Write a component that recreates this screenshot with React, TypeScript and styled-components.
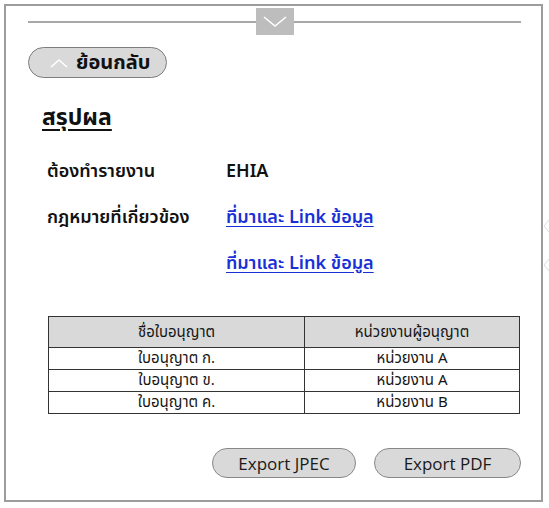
import styled, { createGlobalStyle } from "styled-components";

const GlobalStyle = createGlobalStyle`
  html, body {
    margin: 0;
    padding: 0;
    background: #ffffff;
  }
  body {
    font-family: "Noto Sans Thai", "Noto Sans", "DejaVu Sans", sans-serif;
    color: #111;
  }
`;

const Page = styled.div`
  position: relative;
  width: 549px;
  height: 508px;
  padding: 4px;
  box-sizing: border-box;
`;

const Frame = styled.div`
  width: 539px;
  height: 498px;
  box-sizing: border-box;
  border: 2px solid #9c9c9c;
  display: flex;
  flex-direction: column;
  padding: 2px 20px 0 22px;
`;

const DividerRow = styled.div`
  display: flex;
  align-items: center;
  height: 27px;
`;

const Line = styled.div`
  flex: 1;
  height: 2px;
  background: #a8a8a8;
`;

const Tab = styled.div`
  width: 38px;
  height: 27px;
  background: #bdbdbd;
  display: flex;
  align-items: center;
  justify-content: center;
`;

const BackButton = styled.button`
  margin-top: 12px;
  width: 139px;
  height: 31px;
  box-sizing: border-box;
  border: 1px solid #7d7d7d;
  border-radius: 16px;
  background: #d9d9d9;
  display: flex;
  align-items: center;
  gap: 8px;
  padding: 0 0 0 21px;
  font-family: inherit;
  font-size: 20px;
  font-weight: 700;
  color: #111;
`;

const Title = styled.h2`
  margin: 25px 0 0 14px;
  font-size: 23px;
  font-weight: 700;
  text-decoration: underline;
  text-underline-offset: 4px;
  line-height: 30px;
`;

const InfoGrid = styled.div`
  display: grid;
  grid-template-columns: 179px auto;
  row-gap: 16px;
  margin: 24px 0 0 19px;
  font-size: 18px;
  font-weight: 600;
  line-height: 30px;
`;

const LinkText = styled.a`
  color: #1a2fd6;
  text-decoration: underline;
  text-underline-offset: 3px;
  justify-self: start;
`;

const Table = styled.table`
  margin: 37px 0 0 20px;
  width: 472px;
  border-collapse: collapse;
  font-family: "Noto Sans Thai", "DejaVu Sans", sans-serif;
  font-size: 15px;
  color: #151515;
  border: 1px solid #333;
`;

const HeadCell = styled.th<{ $w?: number }>`
  background: #d9d9d9;
  font-weight: 400;
  height: 30px;
  padding: 0;
  border-left: 1px solid #333;
  border-bottom: 1px solid #333;
  width: ${(p) => (p.$w ? `${p.$w}px` : "auto")};
`;

const Cell = styled.td`
  text-align: center;
  height: 21px;
  padding: 0;
  line-height: 20px;
  border-left: 1px solid #333;
  border-bottom: 1px solid #333;
`;

const Actions = styled.div`
  margin-top: auto;
  margin-bottom: 22px;
  display: flex;
  justify-content: flex-end;
  gap: 18px;
`;

const PillButton = styled.button<{ $w: number }>`
  width: ${(p) => p.$w}px;
  height: 30px;
  box-sizing: border-box;
  border: 1px solid #888;
  border-radius: 15px;
  background: #d9d9d9;
  font-family: "Open Sans", "Noto Sans", sans-serif;
  font-size: 17px;
  color: #1a1a1a;
  padding: 0;
`;

const SideArrow = styled.div<{ $top: number }>`
  position: absolute;
  right: 0;
  top: ${(p) => p.$top}px;
`;

const rows = [
  ["ใบอนุญาต ก.", "หน่วยงาน A"],
  ["ใบอนุญาต ข.", "หน่วยงาน A"],
  ["ใบอนุญาต ค.", "หน่วยงาน B"],
];

function Chevron() {
  return (
    <svg width="26" height="14" viewBox="0 0 26 14">
      <path d="M2 2 L13 11 L24 2" fill="none" stroke="#ffffff" strokeWidth="1.6" />
    </svg>
  );
}

function SideChevron() {
  return (
    <svg width="6" height="14" viewBox="0 0 6 14">
      <path d="M6 1 L1 7 L6 13" fill="none" stroke="#dcdcdc" strokeWidth="1" />
    </svg>
  );
}

function Summary() {
  return (
    <Page>
      <GlobalStyle />
      <Frame>
        <DividerRow>
          <Line />
          <Tab>
            <Chevron />
          </Tab>
          <Line />
        </DividerRow>

        <BackButton>
          <svg width="18" height="10" viewBox="0 0 18 10">
            <path d="M1 9 L9 2 L17 9" fill="none" stroke="#ffffff" strokeWidth="1.6" />
          </svg>
          ย้อนกลับ
        </BackButton>

        <Title>สรุปผล</Title>

        <InfoGrid>
          <span>ต้องทำรายงาน</span>
          <span>EHIA</span>
          <span>กฎหมายที่เกี่ยวข้อง</span>
          <LinkText href="#">ที่มาและ Link ข้อมูล</LinkText>
          <span />
          <LinkText href="#">ที่มาและ Link ข้อมูล</LinkText>
        </InfoGrid>

        <Table>
          <thead>
            <tr>
              <HeadCell $w={255}>ชื่อใบอนุญาต</HeadCell>
              <HeadCell>หน่วยงานผู้อนุญาต</HeadCell>
            </tr>
          </thead>
          <tbody>
            {rows.map(([name, org]) => (
              <tr key={name}>
                <Cell>{name}</Cell>
                <Cell>{org}</Cell>
              </tr>
            ))}
          </tbody>
        </Table>

        <Actions>
          <PillButton $w={144}>Export JPEC</PillButton>
          <PillButton $w={147}>Export PDF</PillButton>
        </Actions>
      </Frame>

      <SideArrow $top={216}>
        <SideChevron />
      </SideArrow>
      <SideArrow $top={255}>
        <SideChevron />
      </SideArrow>
    </Page>
  );
}

export default function App() {
  return <Summary />;
}
